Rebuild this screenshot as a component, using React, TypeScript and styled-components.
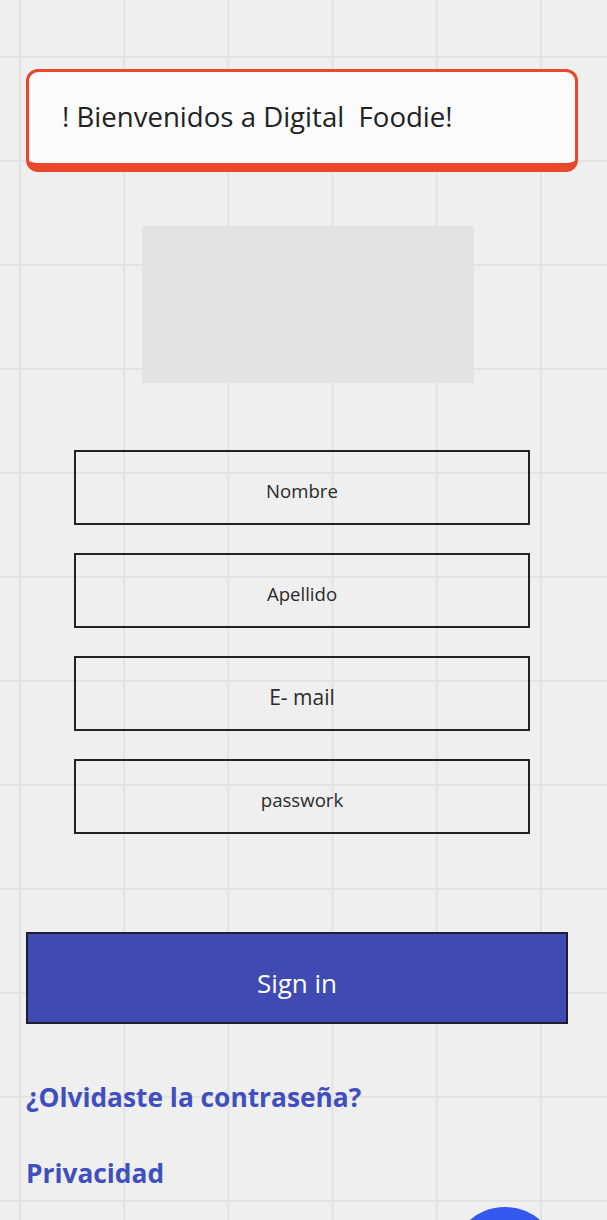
import React from 'react';
import styled, { createGlobalStyle } from 'styled-components';

const GlobalStyle = createGlobalStyle`
  html, body {
    margin: 0;
    padding: 0;
  }
  body {
    font-family: "Open Sans", "Noto Sans", sans-serif;
    background-color: #efefef;
    background-image:
      linear-gradient(to right, #e3e3e3 2px, transparent 2px),
      linear-gradient(to bottom, #e3e3e3 2px, transparent 2px);
    background-size: 104.2px 104px;
    background-position: 19px 56px;
    overflow: hidden;
  }
`;

const Page = styled.div`
  position: relative;
  width: 607px;
  height: 1220px;
  overflow: hidden;
  display: flex;
  flex-direction: column;
`;

const WelcomeCard = styled.div`
  box-sizing: border-box;
  margin: 69px 0 0 26px;
  width: 552px;
  height: 103px;
  background: #fbfbfb;
  border: 3px solid #e8472a;
  border-bottom-width: 9px;
  border-radius: 12px;
  display: flex;
  align-items: center;
  padding: 0 0 4px 33px;
  font-size: 27.6px;
  color: #222;
  white-space: pre;
`;

const ImagePlaceholder = styled.div`
  margin: 54px 0 0 142px;
  width: 332px;
  height: 157px;
  background: #e3e3e3;
`;

const Form = styled.div`
  margin: 67px 0 0 74px;
  width: 456px;
  display: flex;
  flex-direction: column;
  gap: 28px;
`;

const Field = styled.div<{ $size?: number }>`
  box-sizing: border-box;
  height: 75px;
  border: 2px solid #222;
  display: flex;
  align-items: center;
  justify-content: center;
  padding-top: 6px;
  font-size: ${(p) => p.$size ?? 18.6}px;
  color: #2a2a2a;
`;

const SignInButton = styled.button`
  box-sizing: border-box;
  margin: 98px 0 0 26px;
  width: 542px;
  height: 92px;
  background: #3f4bb2;
  border: 2px solid #1e1e30;
  color: #fff;
  font-family: inherit;
  font-size: 26px;
  padding-top: 10px;
  cursor: pointer;
`;

const TextLink = styled.a<{ $top: number }>`
  margin: ${(p) => p.$top}px 0 0 26px;
  font-size: 26.3px;
  font-weight: 700;
  color: #3f4fc0;
  text-decoration: none;
  line-height: 34px;
  align-self: flex-start;
`;

const Fab = styled.div`
  position: absolute;
  left: 451px;
  top: 1207px;
  width: 108px;
  height: 108px;
  border-radius: 50%;
  background: #3358ee;
`;

const fields = [
  { label: 'Nombre' },
  { label: 'Apellido' },
  { label: 'E- mail', size: 21 },
  { label: 'passwork' },
];

const App: React.FC = () => {
  return (
    <Page>
      <GlobalStyle />
      <WelcomeCard>{'! Bienvenidos a Digital  Foodie!'}</WelcomeCard>
      <ImagePlaceholder />
      <Form>
        {fields.map((f) => (
          <Field key={f.label} $size={f.size}>
            {f.label}
          </Field>
        ))}
      </Form>
      <SignInButton>Sign in</SignInButton>
      <TextLink href="#" $top={56}>¿Olvidaste la contraseña?</TextLink>
      <TextLink href="#" $top={42}>Privacidad</TextLink>
      <Fab />
    </Page>
  );
};

export default App;
